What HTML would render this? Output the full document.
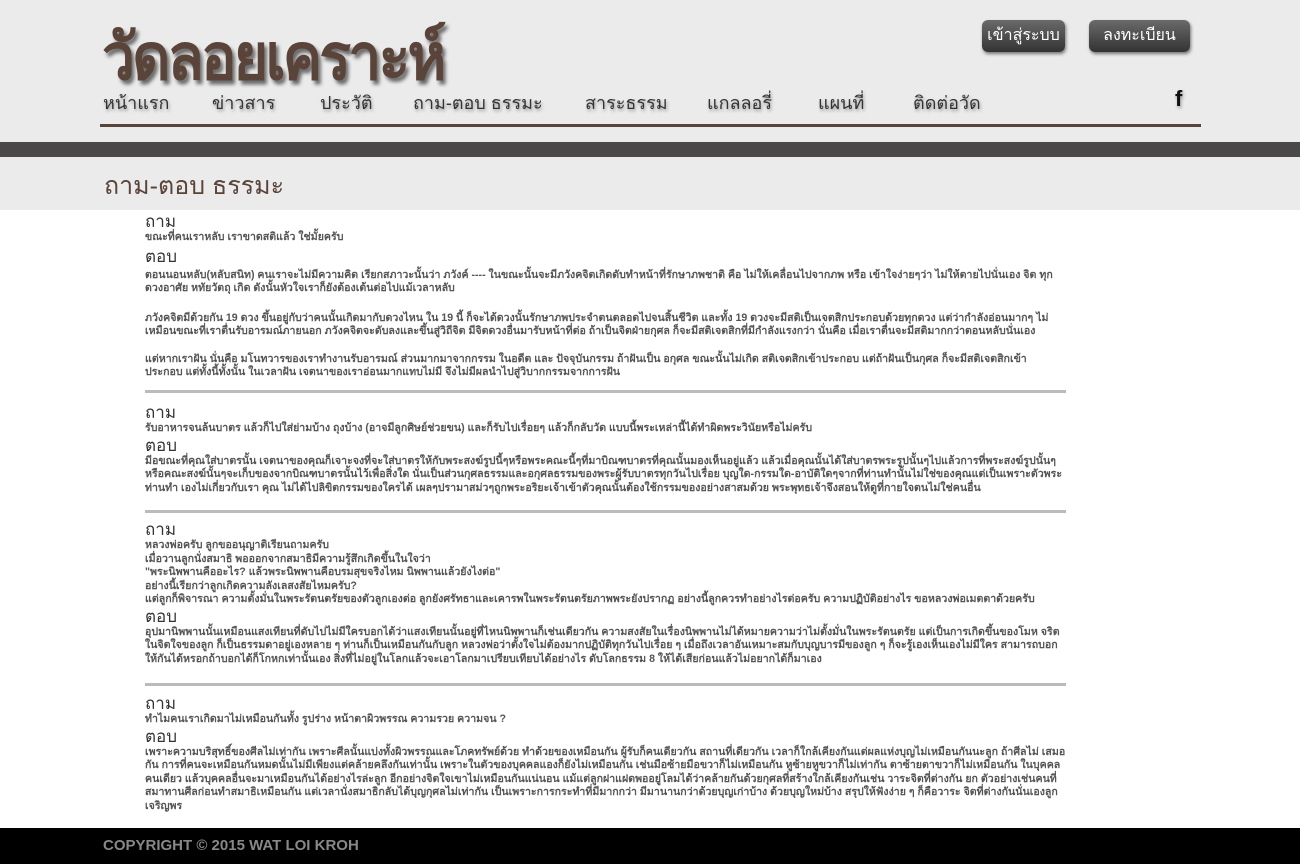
<!DOCTYPE html>
<html><head><meta charset="utf-8"><style>
*{margin:0;padding:0;box-sizing:border-box}
body{width:1300px;height:864px;overflow:hidden;background:#fff;font-family:"Liberation Sans","Noto Sans CJK SC",sans-serif;position:relative}
.hdr{position:absolute;left:0;top:0;width:1300px;height:142px;background:#ebebeb}
.logo{position:absolute;left:102px;top:6px;font-size:64px;font-weight:bold;color:#5a4339;letter-spacing:-3px;text-shadow:3px 4px 4px rgba(0,0,0,.55);transform:scaleX(.92);transform-origin:left}
.btn{position:absolute;top:20px;height:32px;background:linear-gradient(#6a6a6a,#333);border-radius:6px;color:#fff;font-size:16px;line-height:32px;text-align:center;box-shadow:1px 2px 3px rgba(0,0,0,.5)}
.nav{position:absolute;top:88px;font-size:18px;color:#333;text-shadow:1px 2px 3px rgba(0,0,0,.35)}
.rule{position:absolute;left:100px;top:124px;width:1101px;height:3px;background:#5a4339}
.band{position:absolute;left:0;top:142px;width:1300px;height:15px;background:#4a4848}
.tband{position:absolute;left:0;top:157px;width:1300px;height:53px;background:#ebebeb}
.title{position:absolute;left:104px;top:166px;font-size:25px;color:#5a4339}
.c{position:absolute;left:145px;width:922px;color:#555;font-size:10.6px;line-height:13.5px;font-weight:bold}
.h{font-size:17px;line-height:18px;font-weight:normal;color:#333;margin-top:1px}
.sep{position:absolute;left:145px;width:921px;height:3px;background:#bbb}
.foot{position:absolute;left:0;top:828px;width:1300px;height:36px;background:#000;color:#888;font-size:15px;font-weight:bold;line-height:36px;padding-left:103px}
</style></head><body>
<div class="hdr">
<div class="logo">วัดลอยเคราะห์</div>
<div class="btn" style="left:982px;width:83px">เข้าสู่ระบบ</div>
<div class="btn" style="left:1089px;width:101px">ลงทะเบียน</div>
<div class="nav" style="left:103px">หน้าแรก</div>
<div class="nav" style="left:212px">ข่าวสาร</div>
<div class="nav" style="left:320px">ประวัติ</div>
<div class="nav" style="left:413px">ถาม-ตอบ ธรรมะ</div>
<div class="nav" style="left:585px">สาระธรรม</div>
<div class="nav" style="left:707px">แกลลอรี่</div>
<div class="nav" style="left:818px">แผนที่</div>
<div class="nav" style="left:913px">ติดต่อวัด</div>
<div class="nav" style="left:1175px;font-size:22px;top:86px;color:#111;font-weight:bold">f</div>
<div class="rule"></div>
</div>
<div class="band"></div>
<div class="tband"></div>
<div class="title">ถาม-ตอบ ธรรมะ</div>

<div class="c" style="top:212px">
<div class="h">ถาม</div>
<div>ขณะที่คนเราหลับ เราขาดสติแล้ว ใช่มั้ยครับ</div>
<div class="h" style="margin-top:3px">ตอบ</div>
<div style="margin-top:3px">ตอนนอนหลับ(หลับสนิท) คนเราจะไม่มีความคิด เรียกสภาวะนั้นว่า ภวังค์ ---- ในขณะนั้นจะมีภวังคจิตเกิดดับทำหน้าที่รักษาภพชาติ คือ ไม่ให้เคลื่อนไปจากภพ หรือ เข้าใจง่ายๆว่า ไม่ให้ตายไปนั่นเอง จิต ทุกดวงอาศัย หทัยวัตถุ เกิด ดังนั้นหัวใจเราก็ยังต้องเต้นต่อไปแม้เวลาหลับ</div>
<div style="height:16px"></div>
<div>ภวังคจิตมีด้วยกัน 19 ดวง ขึ้นอยู่กับว่าคนนั้นเกิดมากับดวงไหน ใน 19 นี้ ก็จะได้ดวงนั้นรักษาภพประจำตนตลอดไปจนสิ้นชีวิต และทั้ง 19 ดวงจะมีสติเป็นเจตสิกประกอบด้วยทุกดวง แต่ว่ากำลังอ่อนมากๆ ไม่เหมือนขณะที่เราตื่นรับอารมณ์ภายนอก ภวังคจิตจะดับลงและขึ้นสู่วิถีจิต มีจิตดวงอื่นมารับหน้าที่ต่อ ถ้าเป็นจิตฝ่ายกุศล ก็จะมีสติเจตสิกที่มีกำลังแรงกว่า นั่นคือ เมื่อเราตื่นจะมีสติมากกว่าตอนหลับนั่นเอง</div>
<div style="height:14px"></div>
<div>แต่หากเราฝัน นั่นคือ มโนทวารของเราทำงานรับอารมณ์ ส่วนมากมาจากกรรม ในอดีต และ ปัจจุบันกรรม ถ้าฝันเป็น อกุศล ขณะนั้นไม่เกิด สติเจตสิกเข้าประกอบ แต่ถ้าฝันเป็นกุศล ก็จะมีสติเจตสิกเข้า ประกอบ แต่ทั้งนี้ทั้งนั้น ในเวลาฝัน เจตนาของเราอ่อนมากแทบไม่มี จึงไม่มีผลนำไปสู่วิบากกรรมจากการฝัน</div>
</div>
<div class="sep" style="top:390px"></div>

<div class="c" style="top:403px">
<div class="h">ถาม</div>
<div>รับอาหารจนล้นบาตร แล้วก็ไปใส่ย่ามบ้าง ถุงบ้าง (อาจมีลูกศิษย์ช่วยขน) และก็รับไปเรื่อยๆ แล้วก็กลับวัด แบบนี้พระเหล่านี้ได้ทำผิดพระวินัยหรือไม่ครับ</div>
<div class="h">ตอบ</div>
<div>มีอขณะที่คุณใส่บาตรนั้น เจตนาของคุณก็เจาะจงที่จะใส่บาตรให้กับพระสงฆ์รูปนี้ๆหรือพระคณะนี้ๆที่มาบิณฑบาตรที่คุณนั้นมองเห็นอยู่แล้ว แล้วเมื่อคุณนั้นได้ใส่บาตรพระรูปนั้นๆไปแล้วการที่พระสงฆ์รูปนั้นๆ หรือคณะสงฆ์นั้นๆจะเก็บของจากบิณฑบาตรนั้นไว้เพื่อสิ่งใด นั่นเป็นส่วนกุศลธรรมและอกุศลธรรมของพระผู้รับบาตรทุกวันไปเรื่อย บุญใด-กรรมใด-อาบัติใดๆจากที่ท่านทำนั้นไม่ใช่ของคุณแต่เป็นเพราะตัวพระท่านทำ เองไม่เกี่ยวกับเรา คุณ ไม่ได้ไปลิขิตกรรมของใครได้ เผลๆปรามาสม่วๆถูกพระอริยะเจ้าเข้าตัวคุณนั้นต้องใช้กรรมของอย่างสาสมด้วย พระพุทธเจ้าจึงสอนให้ดูที่กายใจตนไม่ใช่คนอื่น</div>
</div>
<div class="sep" style="top:510px"></div>

<div class="c" style="top:520px">
<div class="h">ถาม</div>
<div>หลวงพ่อครับ ลูกขออนุญาติเรียนถามครับ</div>
<div>เมื่อวานลูกนั่งสมาธิ พอออกจากสมาธิมีความรู้สึกเกิดขึ้นในใจว่า</div>
<div>"พระนิพพานคืออะไร? แล้วพระนิพพานคือบรมสุขจริงไหม นิพพานแล้วยังไงต่อ"</div>
<div>อย่างนี้เรียกว่าลูกเกิดความลังเลสงสัยไหมครับ?</div>
<div>แต่ลูกก็พิจารณา ความตั้งมั่นในพระรัตนตรัยของตัวลูกเองต่อ ลูกยังศรัทธาและเคารพในพระรัตนตรัยภาพพระยังปรากฏ อย่างนี้ลูกควรทำอย่างไรต่อครับ ความปฏิบัติอย่างไร ขอหลวงพ่อเมตตาด้วยครับ</div>
<div class="h">ตอบ</div>
<div>อุปมานิพพานนั้นเหมือนแสงเทียนที่ดับไปไม่มีใครบอกได้ว่าแสงเทียนนั้นอยู่ที่ไหนนิพพานก็เช่นเดียวกัน ความสงสัยในเรื่องนิพพานไม่ได้หมายความว่าไม่ตั้งมั่นในพระรัตนตรัย แต่เป็นการเกิดขึ้นของโมห จริตในจิตใจของลูก ก็เป็นธรรมดาอยู่เองหลาย ๆ ท่านก็เป็นเหมือนกันกับลูก หลวงพ่อว่าตั้งใจไม่ต้องมากปฏิบัติทุกวันไปเรื่อย ๆ เมื่อถึงเวลาอันเหมาะสมกับบุญบารมีของลูก ๆ ก็จะรู้เองเห็นเองไม่มีใคร สามารถบอกให้กันได้หรอกถ้าบอกได้ก็โกหกเท่านั้นเอง สิ่งที่ไม่อยู่ในโลกแล้วจะเอาโลกมาเปรียบเทียบได้อย่างไร ดับโลกธรรม 8 ให้ได้เสียก่อนแล้วไม่อยากได้ก็มาเอง</div>
</div>
<div class="sep" style="top:683px"></div>

<div class="c" style="top:694px">
<div class="h">ถาม</div>
<div>ทำไมคนเราเกิดมาไม่เหมือนกันทั้ง รูปร่าง หน้าตาผิวพรรณ ความรวย ความจน ?</div>
<div class="h">ตอบ</div>
<div>เพราะความบริสุทธิ์ของศีลไม่เท่ากัน เพราะศีลนั้นแบ่งทั้งผิวพรรณและโภคทรัพย์ด้วย ทำด้วยของเหมือนกัน ผู้รับก็คนเดียวกัน สถานที่เดียวกัน เวลาก็ใกล้เคียงกันแต่ผลแห่งบุญไม่เหมือนกันนะลูก ถ้าศีลไม่ เสมอกัน การที่คนจะเหมือนกันหมดนั้นไม่มีเพียงแต่คล้ายคลึงกันเท่านั้น เพราะในตัวของบุคคลแองก็ยังไม่เหมือนกัน เช่นมือซ้ายมือขวาก็ไม่เหมือนกัน หูซ้ายหูขวาก็ไม่เท่ากัน ตาซ้ายตาขวาก็ไม่เหมือนกัน ในบุคคลคนเดียว แล้วบุคคลอื่นจะมาเหมือนกันได้อย่างไรล่ะลูก อีกอย่างจิตใจเขาไม่เหมือนกันแน่นอน แม้แต่ลูกฝาแฝดพออยู่โลมได้ว่าคล้ายกันด้วยกุศลที่สร้างใกล้เคียงกันเช่น วาระจิตที่ต่างกัน ยก ตัวอย่างเช่นคนที่สมาทานศีลก่อนทำสมาธิเหมือนกัน แต่เวลานั่งสมาธิกลับได้บุญกุศลไม่เท่ากัน เป็นเพราะการกระทำที่มีมากกว่า มีมานานกว่าด้วยบุญเก่าบ้าง ด้วยบุญใหม่บ้าง สรุปให้ฟังง่าย ๆ ก็คือวาระ จิตที่ต่างกันนั่นเองลูก เจริญพร</div>
</div>

<div class="foot">COPYRIGHT © 2015 WAT LOI KROH</div>
</body></html>
